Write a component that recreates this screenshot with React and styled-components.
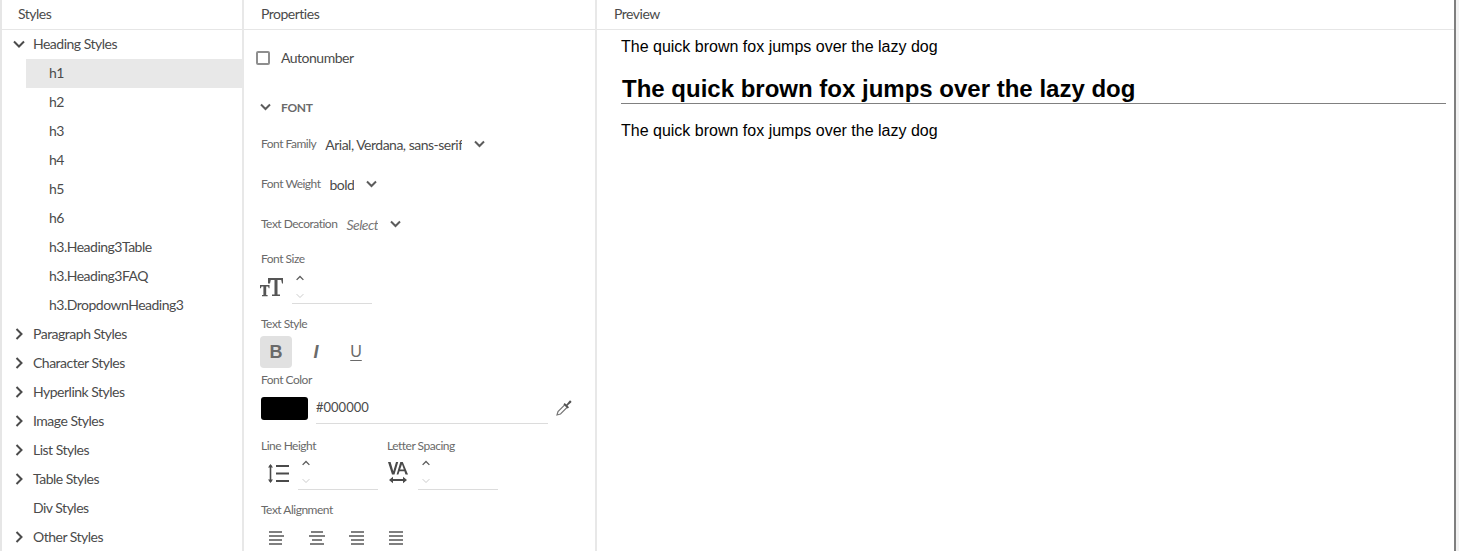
import styled, { createGlobalStyle } from "styled-components";

const GlobalStyle = createGlobalStyle`
    html, body {
        margin: 0;
        padding: 0;
        background: #fff;
        overflow: hidden;
    }
    * {
        box-sizing: border-box;
    }
`

const Page = styled.div`
    display: flex;
    width: 1459px;
    height: 551px;
    overflow: hidden;
    background: #fff;
    border-left: 2px solid #e6e6e6;
    font-family: "Lato", "Open Sans", sans-serif;
    color: #4b4b4b;
    font-size: 14px;
    letter-spacing: -0.5px;
`

const Column = styled.div`
    width: ${(p) => p.$width}px;
    flex-shrink: 0;
    border-right: ${(p) => p.$edge || "2px solid #e8e8e8"};
    overflow: hidden;
`

const Header = styled.div`
    height: 30px;
    padding: 0 0 3px ${(p) => p.$left}px;
    display: flex;
    align-items: center;
    border-bottom: 1px solid #e6e6e6;
`

const Tree = styled.div`
    display: flex;
    flex-direction: column;
`

const Row = styled.div`
    display: flex;
    align-items: center;
    height: 29px;
    flex-shrink: 0;
    margin-left: ${(p) => (p.$child ? 24 : 0)}px;
    padding: 0 0 2px ${(p) => (p.$child ? 23 : 31)}px;
    background: ${(p) => (p.$active ? "#e8e8e8" : "transparent")};
    position: relative;
`

const Twisty = styled.svg`
    position: absolute;
    left: 11px;
    top: 50%;
    transform: translateY(-50%);
    margin-top: -1px;
    width: 12px;
    height: 12px;
    fill: none;
    stroke: #4b4b4b;
    stroke-width: 2;
`

const Props = styled.div`
    padding-left: 17px;
    display: flex;
    flex-direction: column;
`

const CheckRow = styled.div`
    display: flex;
    align-items: center;
    gap: 11px;
    height: 24px;
    margin-top: 16px;
    padding-bottom: 2px;
`

const Box = styled.span`
    width: 14px;
    height: 14px;
    margin: 2px 0 0 -5px;
    border: 2px solid #8e8e8e;
    border-radius: 2px;
`

const SectionHead = styled.div`
    display: flex;
    align-items: center;
    gap: 10px;
    height: 20px;
    margin: 27px 0 0 -1px;
    font-size: 12px;
    font-weight: 700;
    letter-spacing: -0.3px;
    color: #6a6a6a;
`

const SmallChevron = styled.svg`
    width: 11px;
    height: 8px;
    fill: none;
    stroke: ${(p) => p.$color || "#5c5c5c"};
    stroke-width: ${(p) => p.$weight || 2};
    flex-shrink: 0;
`

const SpinChevron = styled(SmallChevron)`
    width: 10px;
    height: 6px;
`

const SelectRow = styled.div`
    display: flex;
    align-items: center;
    height: 20px;
    margin-top: ${(p) => p.$top}px;
`

const FieldLabel = styled.span`
    display: block;
    font-size: 12px;
    line-height: 16px;
    letter-spacing: -0.5px;
    color: #6a6a6a;
    white-space: nowrap;
`

const SelectValue = styled.span`
    display: block;
    margin: 0 12px 0 9px;
    width: ${(p) => (p.$width ? `${p.$width}px` : "auto")};
    overflow: hidden;
    white-space: nowrap;
    font-style: ${(p) => (p.$hint ? "italic" : "normal")};
    color: ${(p) => (p.$hint ? "#777" : "#4b4b4b")};
`

const StackLabel = styled(FieldLabel)`
    margin-top: ${(p) => p.$top}px;
`

const SpinRow = styled.div`
    display: flex;
    align-items: flex-start;
    margin-top: ${(p) => p.$top}px;
`

const IconSlot = styled.div`
    width: ${(p) => p.$width}px;
    height: ${(p) => p.$height}px;
    padding-right: ${(p) => p.$right || 0}px;
    display: flex;
    align-items: center;
    justify-content: ${(p) => p.$justify || "center"};
    flex-shrink: 0;
`

const SpinField = styled.div`
    width: 80px;
    height: ${(p) => p.$height}px;
    border-bottom: 1px solid #dcdcdc;
    display: flex;
    flex-direction: column;
    padding: ${(p) => p.$pad}px 0 0 3px;
    gap: 12px;
    margin-left: ${(p) => p.$left ?? 0}px;
`

const StyleButtons = styled.div`
    display: flex;
    margin-top: 4px;
    margin-left: -1px;
    gap: 8px;
`

const StyleButton = styled.div`
    width: 32px;
    height: 32px;
    border-radius: 4px;
    display: flex;
    align-items: center;
    justify-content: center;
    background: ${(p) => (p.$on ? "#e1e1e1" : "transparent")};
    font-family: "Liberation Sans", sans-serif;
    letter-spacing: 0;
    font-size: ${(p) => p.$size || 18}px;
    font-weight: ${(p) => (p.$bold ? 700 : 400)};
    font-style: ${(p) => (p.$italic ? "italic" : "normal")};
    text-decoration: ${(p) => (p.$under ? "underline" : "none")};
    text-underline-offset: 3px;
    color: #6a6a6a;
`

const ColorRow = styled.div`
    display: flex;
    align-items: flex-start;
    margin-top: 9px;
`

const Swatch = styled.div`
    width: 47px;
    height: 23px;
    background: #000;
    border-radius: 3px;
    flex-shrink: 0;
`

const ColorField = styled.div`
    width: 232px;
    height: 27px;
    margin-left: 8px;
    padding-bottom: 7px;
    border-bottom: 1px solid #dcdcdc;
    display: flex;
    align-items: center;
    font-size: 13px;
    letter-spacing: 0;
`

const Dropper = styled.svg`
    width: 18px;
    height: 18px;
    margin: 2px 0 0 7px;
    flex-shrink: 0;
`

const Pair = styled.div`
    display: flex;
    margin-top: 14px;
`

const PairCell = styled.div`
    width: ${(p) => p.$width}px;
    flex-shrink: 0;
`

const AlignRow = styled.div`
    display: flex;
    gap: 24px;
    margin-top: 13px;
    margin-left: 8px;
`

const AlignIcon = styled.svg`
    width: 16px;
    height: 14px;
    stroke: #6a6a6a;
    stroke-width: 1.7;
    fill: none;
`

const PreviewBody = styled.div`
    padding: 6px 8px 0 24px;
    font-family: "Liberation Sans", Arial, sans-serif;
    letter-spacing: 0;
    color: #000;
`

const SampleText = styled.p`
    margin: ${(p) => p.$top ?? 0}px 0 0;
    font-size: 16px;
    line-height: 22px;
`

const SampleHeading = styled.h1`
    margin: 16px 0 0;
    font-size: 24px;
    line-height: 29px;
    padding-left: 1px;
    font-weight: 700;
    border-bottom: 1px solid #808080;
`

const RightEdge = styled.div`
    flex: 1;
    background: #f2f2f2;
`

const childItems = ["h1", "h2", "h3", "h4", "h5", "h6", "h3.Heading3Table", "h3.Heading3FAQ", "h3.DropdownHeading3"];
const groups = [
    ["Paragraph Styles", true],
    ["Character Styles", true],
    ["Hyperlink Styles", true],
    ["Image Styles", true],
    ["List Styles", true],
    ["Table Styles", true],
    ["Div Styles", false],
    ["Other Styles", true],
];

const aligns = [
    [[0, 13], [0, 15], [0, 13], [0, 13]],
    [[2, 14], [0, 16], [3, 13], [1, 15]],
    [[2, 15], [0, 15], [2, 15], [2, 15]],
    [[0, 14], [0, 14], [0, 14], [0, 14]],
];

function Down() {
    return (
        <SmallChevron viewBox="0 0 11 8">
            <path d="M1 1.500 L5.500 6 L10 1.500" />
        </SmallChevron>
    );
}

function Spinner() {
    return (
        <>
            <SpinChevron viewBox="0 0 11 8" $weight={1.8}>
                <path d="M1 6.500 L5.500 2 L10 6.500" />
            </SpinChevron>
            <SpinChevron viewBox="0 0 11 8" $weight={1.2} $color="#c4c4c4">
                <path d="M1 1.500 L5.500 6 L10 1.500" />
            </SpinChevron>
        </>
    );
}

export default function App() {
    return (
        <Page>
            <GlobalStyle />
            <Column $width={242}>
                <Header $left={16}>Styles</Header>
                <Tree>
                    <Row>
                        <Twisty viewBox="0 0 12 12"><path d="M1 3.500 L6 8.500 L11 3.500" /></Twisty>
                        Heading Styles
                    </Row>
                    {childItems.map((item, i) => (
                        <Row key={item} $child $active={i === 0}>{item}</Row>
                    ))}
                    {groups.map(([name, hasKids]) => (
                        <Row key={name}>
                            {hasKids && <Twisty viewBox="0 0 12 12"><path d="M3.500 1 L8.500 6 L3.500 11" /></Twisty>}
                            {name}
                        </Row>
                    ))}
                </Tree>
            </Column>
            <Column $width={353}>
                <Header $left={17}>Properties</Header>
                <Props>
                    <CheckRow><Box />Autonumber</CheckRow>
                    <SectionHead><Down />FONT</SectionHead>
                    <SelectRow $top={17}>
                        <FieldLabel>Font Family</FieldLabel>
                        <SelectValue $width={137}>Arial, Verdana, sans-serif</SelectValue>
                        <Down />
                    </SelectRow>
                    <SelectRow $top={20}>
                        <FieldLabel>Font Weight</FieldLabel>
                        <SelectValue>bold</SelectValue>
                        <Down />
                    </SelectRow>
                    <SelectRow $top={20}>
                        <FieldLabel>Text Decoration</FieldLabel>
                        <SelectValue $hint>Select</SelectValue>
                        <Down />
                    </SelectRow>
                    <StackLabel $top={17}>Font Size</StackLabel>
                    <SpinRow $top={3}>
                        <IconSlot $width={31} $height={34} $justify="flex-start">
                            <svg width="24" height="20" viewBox="0 0 24 20" fill="#555" style={{ margin: "2px 0 0 -1px" }}>
                                <path d="M8 0h15v5.500h-1l-.8-3.500h-3.700v14.500H20V18h-8v-1.500h2.500V2h-3.700L10 5.500H8z" />
                                <path d="M0 7h9.500v3.200h-.8l-.6-1.800H6.200v8.600H7.600v1.300H2V17h1.400V8.400H1.500l-.6 1.800H0z" />
                            </svg>
                        </IconSlot>
                        <SpinField $height={34} $pad={5}><Spinner /></SpinField>
                    </SpinRow>
                    <StackLabel $top={12}>Text Style</StackLabel>
                    <StyleButtons>
                        <StyleButton $on $bold>B</StyleButton>
                        <StyleButton $italic $bold>I</StyleButton>
                        <StyleButton $under $size={16}>U</StyleButton>
                    </StyleButtons>
                    <StackLabel $top={4}>Font Color</StackLabel>
                    <ColorRow>
                        <Swatch />
                        <ColorField>#000000</ColorField>
                        <Dropper viewBox="0 0 18 18">
                            <path d="M2 16 L3 12.500 L10 5.500 L12.500 8 L5.500 15 Z" fill="none" stroke="#777" strokeWidth="1.200" />
                            <path d="M9.500 4 L11.500 5.500 L14.500 1.800 C15.500 1 17 2.500 16.200 3.500 L12.500 6.500 L14 8.500 L12.500 9.500 L8.500 5.500 Z" fill="#555" />
                        </Dropper>
                    </ColorRow>
                    <Pair>
                        <PairCell $width={126}>
                            <FieldLabel>Line Height</FieldLabel>
                            <SpinRow $top={6}>
                                <IconSlot $width={37} $height={26} $right={3}>
                                    <svg width="22" height="21" viewBox="0 0 22 21" stroke="#4a4a4a" fill="none">
                                        <path d="M9 3h13M9 10.500h13M9 18h13" strokeWidth="2" />
                                        <path d="M3.500 2v17" strokeWidth="1.600" />
                                        <path d="M1 4.500L3.500 1 6 4.500zM1 16.500L3.500 20 6 16.500z" fill="#4a4a4a" stroke="none" />
                                    </svg>
                                </IconSlot>
                                <SpinField $height={30} $pad={0}><Spinner /></SpinField>
                            </SpinRow>
                        </PairCell>
                        <PairCell $width={130}>
                            <FieldLabel>Letter Spacing</FieldLabel>
                            <SpinRow $top={6}>
                                <IconSlot $width={24} $height={26} $right={2}>
                                    <svg width="20" height="22" viewBox="0 0 20 22" fill="#4a4a4a">
                                        <path d="M0 0h2.600l2.700 9.300L8 0h2.200L6.500 12.500H4z" />
                                        <path d="M12.300 0h2.500L20 12.500h-2.500l-1.100-3.200h-4.900l-1.100 3.200H8.600zM12.100 7.400h3.700L14 2.300z" />
                                        <path d="M1 18 L5 14.800 V17 H15 V14.800 L19 18 L15 21.200 V19 H5 V21.200 Z" />
                                    </svg>
                                </IconSlot>
                                <SpinField $height={30} $pad={0} $left={7}><Spinner /></SpinField>
                            </SpinRow>
                        </PairCell>
                    </Pair>
                    <StackLabel $top={12}>Text Alignment</StackLabel>
                    <AlignRow>
                        {aligns.map((lines, i) => (
                            <AlignIcon key={i} viewBox="0 0 16 14">
                                {lines.map(([a, b], j) => (
                                    <line key={j} x1={a} x2={b} y1={1 + j * 4} y2={1 + j * 4} />
                                ))}
                            </AlignIcon>
                        ))}
                    </AlignRow>
                </Props>
            </Column>
            <Column $width={859} $edge="2px solid #7f7f7f">
                <Header $left={17}>Preview</Header>
                <PreviewBody>
                    <SampleText>The quick brown fox jumps over the lazy dog</SampleText>
                    <SampleHeading>The quick brown fox jumps over the lazy dog</SampleHeading>
                    <SampleText $top={16}>The quick brown fox jumps over the lazy dog</SampleText>
                </PreviewBody>
            </Column>
            <RightEdge />
        </Page>
    );
}
